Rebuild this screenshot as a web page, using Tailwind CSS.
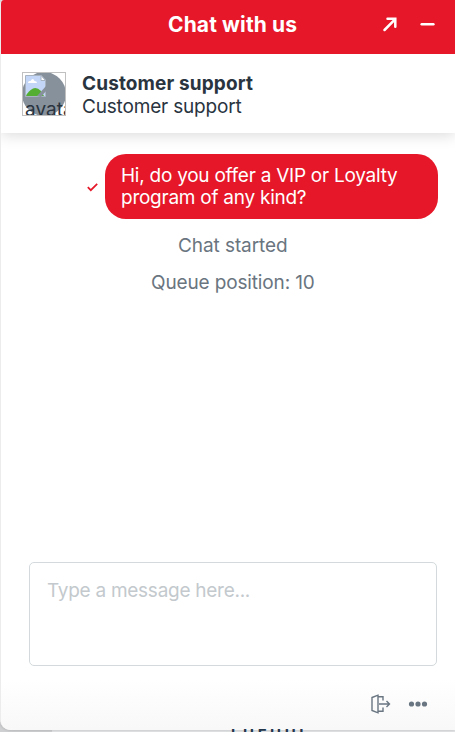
<!DOCTYPE html>
<html lang="en">
<head>
<meta charset="utf-8">
<title>Chat with us</title>
<script src="https://cdn.jsdelivr.net/npm/@tailwindcss/browser@4"></script>
</head>
<body class="bg-[#e4e5e7] font-['Inter',sans-serif]">
<div class="relative h-[732px] w-[455px] overflow-hidden">
  <div class="absolute bottom-0 left-0 h-[10px] w-[52px] bg-[#cfd0d2]"></div>
  <main class="relative flex h-[730px] flex-col overflow-hidden rounded-tl-[4px] rounded-bl-[10px] border-l border-[#ececed] bg-white shadow-[0_0_3px_rgba(0,0,0,0.2)]">
    <header class="relative z-20 flex h-[54px] shrink-0 items-center bg-[#e51728] pl-[167px] text-white">
      <h1 class="w-[213px] pb-[5px] text-[21px] leading-6 font-bold tracking-[0.13px] whitespace-nowrap">Chat with us</h1>
      <svg class="mb-[6px] h-5 w-5" viewBox="0 0 20 20" fill="none" stroke="currentColor" stroke-width="2.500" stroke-linecap="round"><path d="M3.500 16 14 5.300M6.500 4.800H14.300V12.800"/></svg>
      <svg class="mb-[6px] ml-[18px] h-5 w-5" viewBox="0 0 20 20" fill="none" stroke="currentColor" stroke-width="2.500" stroke-linecap="round"><path d="M2.700 10.200H14.400"/></svg>
    </header>
    <section class="z-10 flex h-[79px] shrink-0 items-center bg-white pl-[21px] text-[#29343f] shadow-[0_2px_14px_rgba(0,0,0,0.15)]">
      <div class="relative h-[44px] w-[44px] overflow-hidden border border-[#c0c0c0]">
        <div class="absolute -left-px -top-px h-[44px] w-[44px] rounded-full bg-[#87919b]"></div>
        <svg class="absolute left-[2px] top-[2px] h-[22px] w-[22px]" viewBox="0 0 22 22"><path d="M.5.5H16L20.500 5V21.500H.5Z" fill="#c3d6f7" stroke="#a8b3c1"/><path d="M3 8Q3 5.500 5.500 6Q8 2 9.500 6Q12 6 12 8Z" fill="#fff"/><path d="M1 21Q3 16 8 13.500Q12 12 16 16L19 21Z" fill="#54ae32"/><path d="M16 .5V5.500H20.500Z" fill="#fff" stroke="#a8b3c1"/><path d="M12 21 22 10V15L16 22Z" fill="#87919b"/></svg>
        <span class="absolute left-[2px] top-[26px] text-[19px] leading-[22px]">avatar</span>
      </div>
      <div class="pt-[3px] pl-[16px] text-[19px] leading-[23px] whitespace-nowrap">
        <p class="w-fit font-bold tracking-[0.13px]">Customer support</p>
        <p class="w-fit tracking-[-0.18px]">Customer support</p>
      </div>
    </section>
    <section class="flex h-[429px] shrink-0 flex-col pt-[21px]">
      <div class="flex items-center pl-[86px]">
        <svg class="mt-[2px] mr-[7px] h-[11px] w-[11px]" viewBox="0 0 11 11" fill="none" stroke="#e51728" stroke-width="1.700"><path d="M.8 5.200 3.800 8.200 10.200 1.800"/></svg>
        <div class="h-[65px] w-[333px] rounded-[21px] bg-[#e51728] pl-[16px] pt-[11px] text-[19px] leading-[22px] tracking-[-0.25px] whitespace-nowrap text-white"><p class="w-fit">Hi, do you offer a VIP or Loyalty</p><p class="w-fit">program of any kind?</p></div>
      </div>
      <p class="mt-[15px] ml-[177px] w-fit text-[19px] leading-6 tracking-[-0.08px] whitespace-nowrap text-[#6a7580]">Chat started</p>
      <p class="mt-[13px] ml-[150px] w-fit text-[19px] leading-6 tracking-[-0.14px] whitespace-nowrap text-[#6a7580]">Queue position: 10</p>
    </section>
    <footer class="flex grow flex-col bg-linear-to-b from-white from-70% to-[#f8f8f9] pl-[28px]">
      <div class="h-[104px] w-[408px] rounded-[5px] border border-[#d3d9dc] bg-white pt-[16px] pl-[17px] text-[19px] leading-6 tracking-[-0.27px] whitespace-nowrap text-[#c3c9cd]"><p class="w-fit">Type a message here...</p></div>
      <div class="mt-[28px] flex items-center pl-[341px] text-[#697682]">
        <svg class="h-[20px] w-[22px]" viewBox="0 0 22 20" fill="none" stroke="currentColor" stroke-width="1.400"><path d="M2 3.500 8 1.200V18.800L2 16.500ZM8 2.700H13V6.500M8 17.300H13V13.500M9 10H19.500M16.500 7 19.500 10 16.500 13"/></svg>
        <svg class="ml-[16px] h-5 w-5" viewBox="0 0 20 20" fill="currentColor"><circle cx="3.500" cy="10" r="2.600"/><circle cx="10" cy="10" r="2.600"/><circle cx="16.500" cy="10" r="2.600"/></svg>
      </div>
    </footer>
  </main>
  <div class="absolute left-[231px] top-[725px] text-[15px] leading-5 font-bold tracking-[3.600px] whitespace-nowrap text-[#22364c]">LUFUUI</div>
</div>
</body>
</html>
